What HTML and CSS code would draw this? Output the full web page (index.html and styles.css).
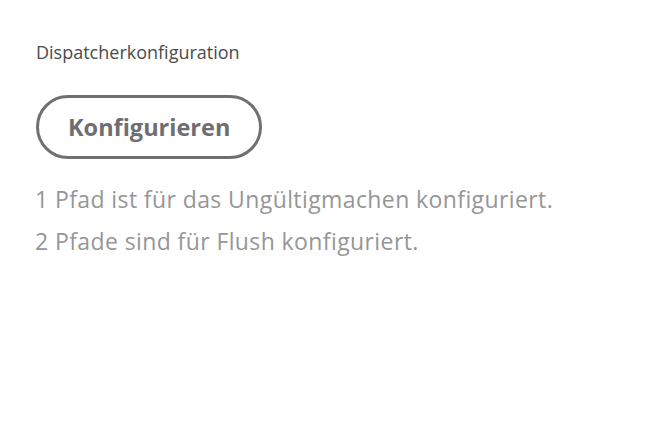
FILE: index.html
```html
<!DOCTYPE html>
<html lang="de">
<head>
<meta charset="utf-8">
<link rel="stylesheet" href="styles.css">
</head>
<body>
<main class="panel">
  <h2 class="label">Dispatcherkonfiguration</h2>
  <button class="btn" type="button">Konfigurieren</button>
  <div class="info">
    <p>1 Pfad ist für das Ungültigmachen konfiguriert.</p>
    <p>2 Pfade sind für Flush konfiguriert.</p>
  </div>
</main>
</body>
</html>
```
FILE: styles.css
```css
html, body {
  margin: 0;
  padding: 0;
  background: #ffffff;
}
body {
  font-family: "Open Sans", "Noto Sans", sans-serif;
  font-variant-ligatures: none;
}
.panel {
  padding: 40px 0 0 36px;
  display: flex;
  flex-direction: column;
  align-items: flex-start;
}
.label {
  margin: 0;
  font-size: 18px;
  font-weight: 400;
  color: #4b4b4b;
  line-height: 24px;
}
.btn {
  margin-top: 31px;
  height: 64px;
  padding: 0 29px;
  border: 3px solid #707070;
  border-radius: 32px;
  background: #fff;
  font-family: inherit;
  font-size: 23.5px;
  font-weight: 700;
  color: #6e6e6e;
  font-variant-ligatures: none;
}
.info {
  margin-top: 19px;
  margin-left: -1px;
}
.info p {
  margin: 0;
  font-size: 23px;
  letter-spacing: 0.4px;
  line-height: 42px;
  color: #969696;
}
```
